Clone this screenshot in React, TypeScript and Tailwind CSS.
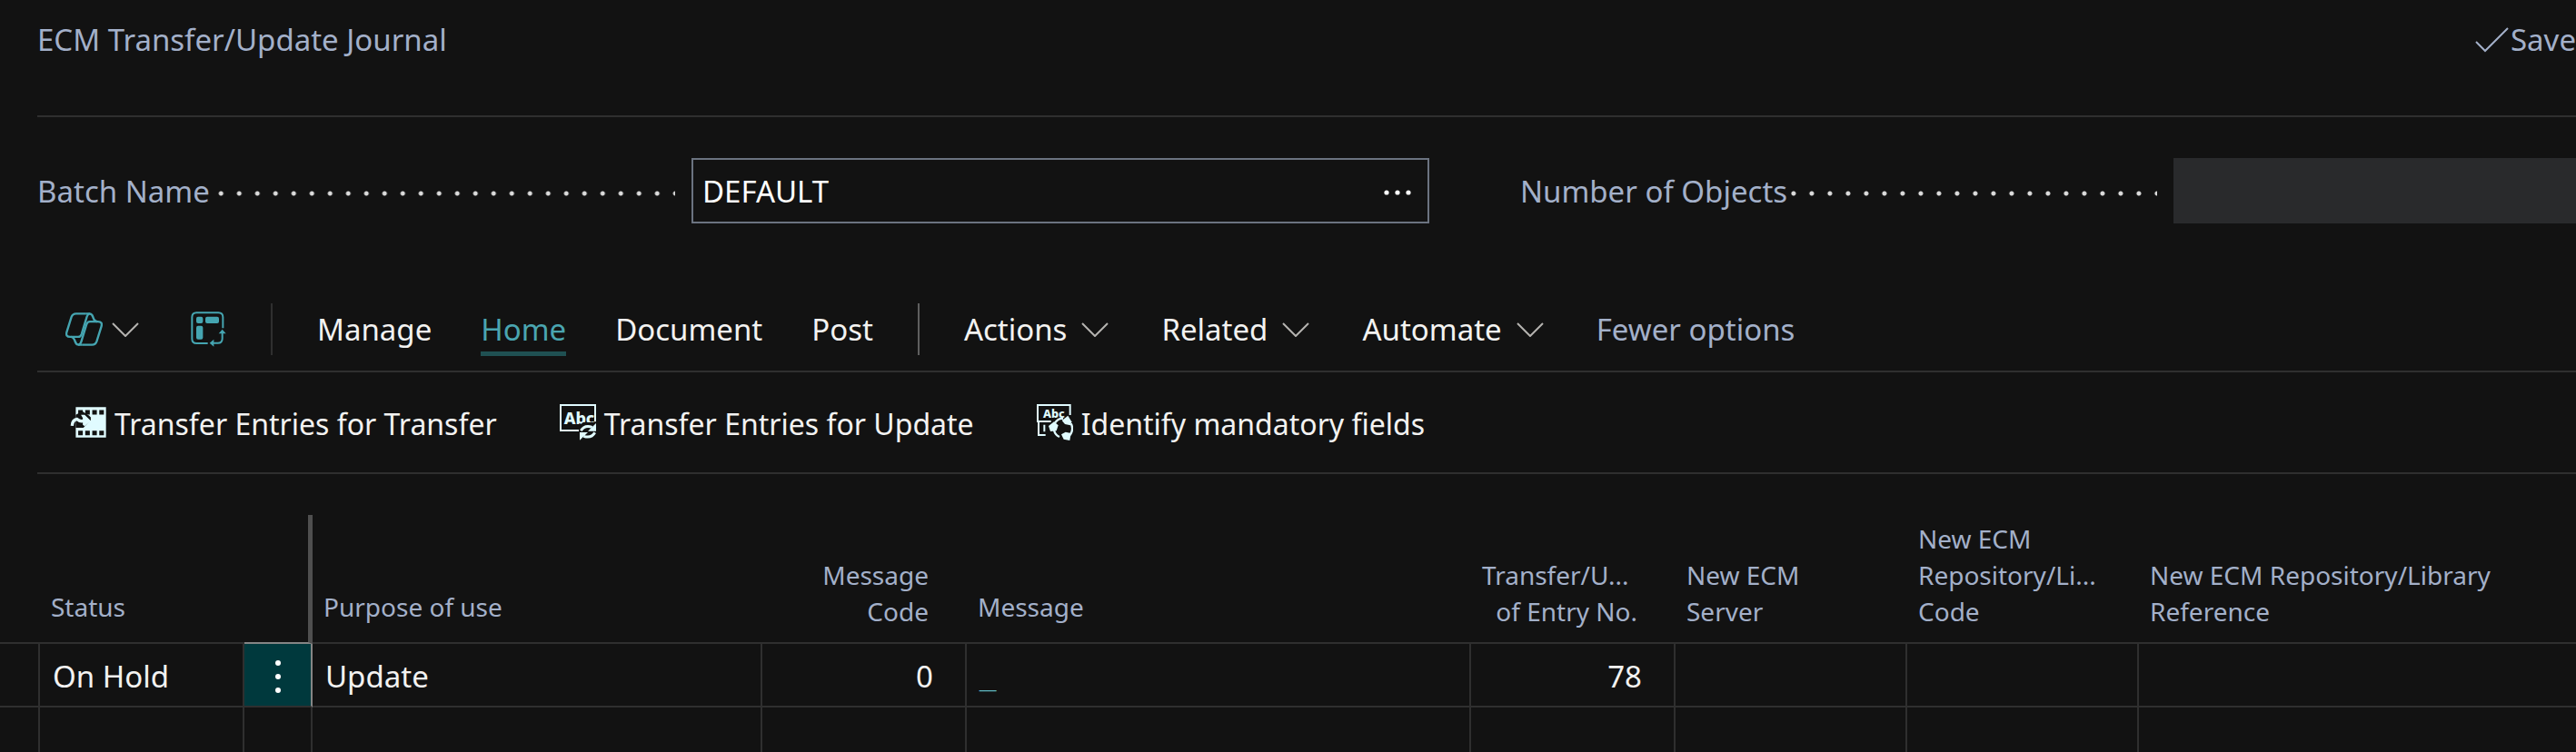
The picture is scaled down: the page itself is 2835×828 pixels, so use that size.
const tabs = ["Manage", "Home", "Document", "Post"];

const menus = ["Actions", "Related", "Automate"];

const columns = [
  { key: "selector", lines: [], width: "w-[44px]" },
  { key: "status", lines: ["Status"], width: "w-[225px]" },
  { key: "menu", lines: [], width: "w-[75px]" },
  { key: "purpose", lines: ["Purpose of use"], width: "w-[495px]" },
  { key: "code", lines: ["Message", "Code"], width: "w-[225px]" },
  { key: "message", lines: ["Message"], width: "w-[555px]" },
  { key: "entry", lines: ["Transfer/U...", "of Entry No."], width: "w-[225px]" },
  { key: "server", lines: ["New ECM", "Server"], width: "w-[255px]" },
  { key: "repository", lines: ["New ECM", "Repository/Li...", "Code"], width: "w-[255px]" },
  { key: "reference", lines: ["New ECM Repository/Library", "Reference"], width: "" },
];

const rows = [
  { status: "On Hold", purpose: "Update", code: "0", message: "_", entry: "78" },
];

function Chevron() {
  return (
    <svg viewBox="0 0 30 16" className="h-4 w-[30px]" fill="none" stroke="#b5b3b0" strokeWidth="2">
      <path d="M1 1l14 14L29 1" />
    </svg>
  );
}

function CopilotIcon() {
  return (
    <svg viewBox="39 39 120 109" className="h-[37px] w-[41px]" fill="none" stroke="#45a5b1" strokeWidth="7">
      <path d="M106 43H73Q62 43 58 54L43 102Q38 118 54 118H80Q88 118 91 109L106 60Q110 43 118 43" />
      <path d="M106 43H116Q125 43 128 54Q132 68 142 69" />
      <path d="M92 144H125Q136 144 140 133L155 85Q160 69 144 69H118Q110 69 107 78L92 127Q88 144 80 144" />
      <path d="M92 144H82Q73 144 70 133Q66 119 56 118" />
    </svg>
  );
}

function AnalyzeIcon() {
  return (
    <svg viewBox="449 39 117 117" className="size-[39px]" fill="#45a5b1">
      <g fill="none" stroke="#45a5b1" strokeWidth="6">
        <path d="M555 94V58Q555 43 540 43H468Q453 43 453 58V129Q453 144 468 144H505" />
        <path d="M553 108V128Q553 143 538 143H520" />
      </g>
      <rect x="467" y="56" width="22" height="22" rx="6" />
      <rect x="497" y="56" width="45" height="22" rx="6" />
      <rect x="467" y="86" width="22" height="45" rx="6" />
      <path d="M553 98l12 14h-24zM511 143l14-12v24z" />
    </svg>
  );
}

function TransferIcon() {
  return (
    <svg viewBox="50 350 119 101" className="h-[34px] w-10" fill="#e0fbff">
      <path d="M69 351h99v99h-99z" />
      <path
        fill="#121212"
        d="M77 360h15v15h-15zM100 360h15v15h-15zM123 360h15v15h-15zM146 360h15v15h-15zM77 428h15v15h-15zM100 428h15v15h-15zM123 428h15v15h-15zM146 428h15v15h-15z"
      />
      <path fill="#121212" d="M69 376L90 364L112 378L118 384V392L94 418H69Z" />
      <path d="M57 412Q58 392 73 390Q84 400 96 395" fill="none" stroke="#e0fbff" strokeWidth="10" />
      <path d="M86 376h12l20 19-20 18-6-4V386z" />
    </svg>
  );
}

function UpdateIcon() {
  return (
    <svg viewBox="39 30 120 120" className="size-10" fill="#e0fbff">
      <path d="M104 117H42V33H156V88" fill="none" stroke="#e0fbff" strokeWidth="6" />
      <text x="53" y="97" fontFamily="Noto Sans" fontSize="54" fontWeight="800">
        Abc
      </text>
      <path fill="#121212" d="M102 102l14-12h46v64h-60z" />
      <g fill="none" stroke="#e0fbff" strokeWidth="9">
        <path d="M109 118Q120 98 146 106" />
        <path d="M155 124Q144 144 118 136" />
      </g>
      <path d="M159 93v26h-27zM105 149v-26h27z" />
    </svg>
  );
}

function IdentifyIcon() {
  return (
    <svg viewBox="37 30 120 120" className="size-10" fill="#e0fbff">
      <path d="M84 87H40V33H147V66M43 87V132H66M62 98V121" fill="none" stroke="#e0fbff" strokeWidth="6" />
      <text x="58" y="75" fontFamily="Noto Sans" fontSize="38" fontWeight="800">
        Abc
      </text>
      <g fill="none" stroke="#e0fbff" strokeWidth="7">
        <path d="M97 92Q108 76 124 78" />
        <path d="M150 94Q160 114 147 132" />
        <path d="M94 116Q98 132 112 138" />
      </g>
      <path d="M76 102l18-14 14 12-6 18-20 2z" />
      <path d="M120 84l20-16 12 20-4 12-18-4z" />
      <path d="M118 130l14-8 18 4-4 24-20-4z" />
    </svg>
  );
}

const processActions = [
  { label: "Transfer Entries for Transfer", icon: <TransferIcon /> },
  { label: "Transfer Entries for Update", icon: <UpdateIcon /> },
  { label: "Identify mandatory fields", icon: <IdentifyIcon /> },
];

function Leader() {
  return (
    <span className="mr-[18px] ml-1 h-[26px] flex-1 bg-[radial-gradient(circle,#dcdcdc_2px,transparent_3px)] bg-[length:20px_20px] bg-[position:right_-10px_bottom] bg-repeat-x" />
  );
}

export default function App() {
  return (
    <main className="h-screen overflow-hidden bg-[#121212] font-['Noto_Sans',sans-serif] text-[33px] leading-[48px] text-[#f3f2f1]">
      <div className="pl-[41px]">
        <header className="flex items-center justify-between border-b-2 border-[#2f2f2f] pt-5 pb-[59px] text-[#a3b0c9]">
          <h1>ECM Transfer/Update Journal</h1>
          <p className="flex items-center gap-0.5">
            <svg viewBox="0 0 37 28" className="h-7 w-[37px]" fill="none" stroke="currentColor" strokeWidth="2">
              <path d="M1 16l10 10L36 1" />
            </svg>
            Save
          </p>
        </header>

        <section className="flex gap-[100px] pt-[45px]">
          <div className="flex w-[1532px] shrink-0 items-center">
            <div className="flex w-[720px] items-center">
              <label htmlFor="batch" className="pt-0.5 text-[#a3b0c9]">
                Batch Name
              </label>
              <Leader />
            </div>
            <div className="flex h-[72px] flex-1 border-2 border-[#6b7380]">
              <input
                id="batch"
                type="text"
                defaultValue="DEFAULT"
                className="min-w-0 flex-1 bg-transparent pt-0.5 pl-[10px] text-white outline-none"
              />
              <button aria-label="Choose a value for Batch Name" className="flex w-[67px] items-center justify-center pt-1">
                <svg viewBox="0 0 30 6" className="h-[6px] w-[30px]" fill="#ffffff">
                  <circle cx="3" cy="3" r="2.6" />
                  <circle cx="15" cy="3" r="2.6" />
                  <circle cx="27" cy="3" r="2.6" />
                </svg>
              </button>
            </div>
          </div>
          <div className="flex flex-1 items-center">
            <div className="flex w-[719px] shrink-0 items-center">
              <label htmlFor="objects" className="pt-0.5 text-[#a3b0c9]">
                Number of Objects
              </label>
              <Leader />
            </div>
            <input id="objects" type="text" readOnly className="h-[72px] min-w-0 flex-1 bg-[#292a2c] outline-none" />
          </div>
        </section>

        <nav className="mt-[69px] flex h-[95px] items-center gap-[49px] border-b-2 border-[#2f2f2f] pt-0.5 pl-[31px]">
          <button aria-label="Copilot" className="flex items-center gap-[10px] pr-2">
            <CopilotIcon />
            <Chevron />
          </button>
          <button aria-label="Enter analysis mode">
            <AnalyzeIcon />
          </button>
          <span className="h-[57px] w-0.5 bg-[#2f2f2f]" />
          <div className="flex gap-[54px]">
            {tabs.map((tab) => (
              <button
                key={tab}
                className={
                  tab === "Home"
                    ? "border-b-[5px] border-[#1f5052] pt-[5px] text-[#4aa5b0]"
                    : "border-b-[5px] border-transparent pt-[5px]"
                }
              >
                {tab}
              </button>
            ))}
          </div>
          <span className="h-[57px] w-0.5 bg-[#5f5f5f]" />
          <div className="flex gap-[58px]">
            {menus.map((menu) => (
              <button key={menu} className="flex items-center gap-4">
                {menu}
                <Chevron />
              </button>
            ))}
            <button className="text-[#a3b0c9]">Fewer options</button>
          </div>
        </nav>

        <div className="flex h-28 items-center gap-[69px] border-b-2 border-[#2f2f2f] pl-9 text-[32px]">
          {processActions.map(({ label, icon }) => (
            <button key={label} className="flex items-center gap-[9px]">
              {icon}
              <span className="pt-1">{label}</span>
            </button>
          ))}
        </div>
      </div>

      <table className="mt-[45px] w-full table-fixed border-separate border-spacing-0">
        <thead>
          <tr className="h-[142px] text-[28px] text-[#a3b0c9]">
            {columns.map(({ key, lines, width }) => (
              <th
                key={key}
                className={
                  width +
                  " border-b-2 pl-3 text-left align-bottom font-normal " +
                  (key === "menu" ? "border-r-[5px] border-r-[#4f4f4f] border-b-[#858585]" : "border-[#2f2f2f]")
                }
              >
                <div
                  className={
                    (lines.length > 1 ? "pb-[14px] leading-10 " : "pb-[14px] leading-[50px] ") +
                    (key === "code" || key === "entry" ? "pr-[42px] text-right" : "")
                  }
                >
                  {lines.map((line) => (
                    <span
                      key={line}
                      className={line.startsWith("Transfer") ? "block text-left whitespace-nowrap" : "block whitespace-nowrap"}
                    >
                      {line}
                    </span>
                  ))}
                </div>
              </th>
            ))}
          </tr>
        </thead>
        <tbody className="[&_td]:border-b-2 [&_td]:border-[#2f2f2f] [&_td:not(:last-child)]:border-r-2">
          {rows.map((row) => (
            <tr key={row.entry} className="h-[70px]">
              <td />
              <td className="pt-1 pl-[14px]">{row.status}</td>
              <td className="border-r-[#858585]! bg-[#00393d]">
                <button aria-label="Show more options" className="flex h-[68px] w-full items-center justify-center pt-1">
                  <svg viewBox="0 0 6 36" className="h-9 w-[6px]" fill="#ffffff">
                    <circle cx="3" cy="3" r="3" />
                    <circle cx="3" cy="18" r="3" />
                    <circle cx="3" cy="33" r="3" />
                  </svg>
                </button>
              </td>
              <td className="pt-1 pl-[14px]">{row.purpose}</td>
              <td className="pt-1 pr-[35px] text-right">{row.code}</td>
              <td className="pt-1 pl-[14px]">
                <a href="#message" className="font-['Liberation_Sans',sans-serif] font-bold text-[#5fb6bf]">
                  {row.message}
                </a>
              </td>
              <td className="pt-1 pr-[35px] text-right">{row.entry}</td>
              <td />
              <td />
              <td />
            </tr>
          ))}
          <tr className="h-[70px]">
            {columns.map(({ key }) => (
              <td key={key} />
            ))}
          </tr>
        </tbody>
      </table>
    </main>
  );
}
